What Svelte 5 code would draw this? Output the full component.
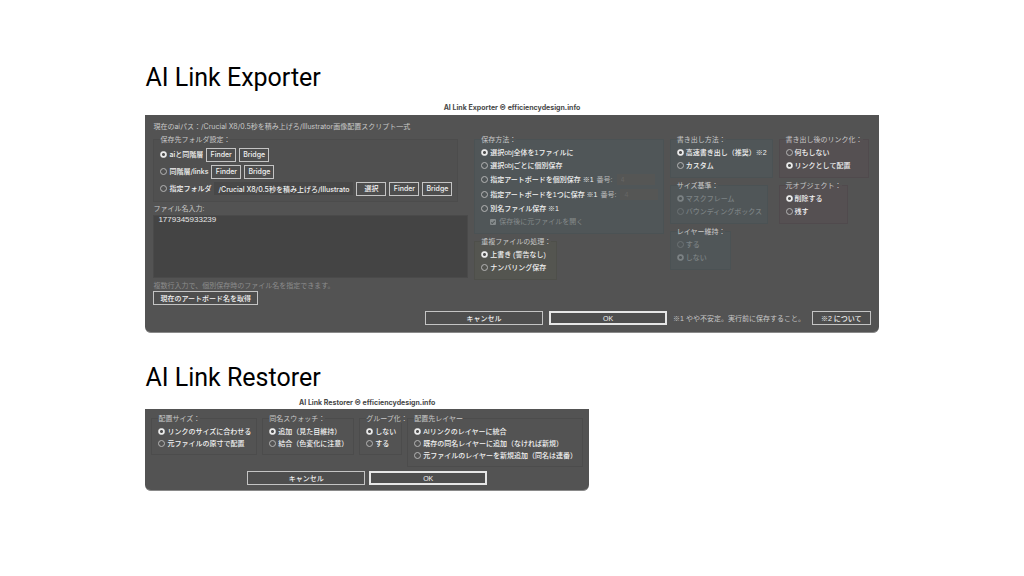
<script>
  const folder = '/Crucial X8/0.5秒を積み上げろ/Illustrato'

  const saveMethods = [
    { label: '選択obj全体を1ファイルに' },
    { label: '選択objごとに個別保存' },
    { label: '指定アートボードを個別保存 ※1', number: '4' },
    { label: '指定アートボードを1つに保存 ※1', number: '4' },
    { label: '別名ファイル保存 ※1' },
  ]

  const exportGroups = [
    { id: 'speed', title: '書き出し方法：', options: ['高速書き出し（推奨）※2', 'カスタム'], picked: 0 },
    { id: 'size', title: 'サイズ基準：', options: ['マスクフレーム', 'バウンディングボックス'], picked: 0, disabled: true },
    { id: 'layer', title: 'レイヤー維持：', options: ['する', 'しない'], picked: 1, disabled: true },
  ]

  const linkGroups = [
    { id: 'link', title: '書き出し後のリンク化：', options: ['何もしない', 'リンクとして配置'], picked: 1 },
    { id: 'source', title: '元オブジェクト：', options: ['削除する', '残す'], picked: 0 },
  ]

  const duplicateGroup = {
    id: 'duplicate',
    title: '重複ファイルの処理：',
    options: ['上書き (警告なし)', 'ナンバリング保存'],
    picked: 0,
  }

  const restoreGroups = [
    { id: 'place', title: '配置サイズ：', options: ['リンクのサイズに合わせる', '元ファイルの原寸で配置'], picked: 0 },
    { id: 'swatch', title: '同名スウォッチ：', options: ['追加（見た目維持）', '結合（色変化に注意）'], picked: 0 },
    { id: 'grouping', title: 'グループ化：', options: ['しない', 'する'], picked: 0 },
    {
      id: 'target',
      title: '配置先レイヤー',
      options: [
        'AIリンクのレイヤーに統合',
        '既存の同名レイヤーに追加（なければ新規）',
        '元ファイルのレイヤーを新規追加（同名は連番）',
      ],
      picked: 0,
    },
  ]

  let names = $state('1779345933239')
</script>

{#snippet radioGroup(group, tint)}
  <fieldset class={tint} disabled={group.disabled}>
    <legend>{group.title}</legend>
    {#each group.options as option, i}
      <label class="option">
        <input type="radio" name={group.id} checked={i === group.picked} />
        {option}
      </label>
    {/each}
  </fieldset>
{/snippet}

<main lang="ja">
  <section>
    <h1>AI Link Exporter</h1>
    <div class="window">
      <h2>AI Link Exporter © efficiencydesign.info</h2>
      <form class="panel exporter">
        <p class="path">現在のaiパス：/Crucial X8/0.5秒を積み上げろ/Illustrator画像配置スクリプト一式</p>
        <div class="columns">
          <div class="column files">
            <fieldset class="folders">
              <legend>保存先フォルダ設定：</legend>
              <div class="folder">
                <label class="option"><input type="radio" name="folder" checked /> aiと同階層</label>
                <button type="button">Finder</button>
                <button type="button">Bridge</button>
              </div>
              <div class="folder">
                <label class="option"><input type="radio" name="folder" /> 同階層/links</label>
                <button type="button">Finder</button>
                <button type="button">Bridge</button>
              </div>
              <div class="folder">
                <label class="option"><input type="radio" name="folder" /> 指定フォルダ</label>
                <input class="folder-path" type="text" value={folder} aria-label="指定フォルダ" />
                <button type="button">選択</button>
                <button type="button">Finder</button>
                <button type="button">Bridge</button>
              </div>
            </fieldset>
            <label class="names-label" for="names">ファイル名入力:</label>
            <textarea id="names" bind:value={names}></textarea>
            <p class="hint">複数行入力で、個別保存時のファイル名を指定できます。</p>
            <button type="button" class="artboard">現在のアートボード名を取得</button>
          </div>

          <div class="column methods">
            <fieldset class="teal wide">
              <legend>保存方法：</legend>
              {#each saveMethods as method, i}
                <div class="method">
                  <label class="option">
                    <input type="radio" name="method" checked={i === 0} />
                    {method.label}
                  </label>
                  {#if method.number}
                    <label class="number">
                      番号:
                      <input type="text" value={method.number} disabled />
                    </label>
                  {/if}
                </div>
              {/each}
              <label class="option reopen">
                <input type="checkbox" checked disabled />
                保存後に元ファイルを開く
              </label>
            </fieldset>
            {@render radioGroup(duplicateGroup, 'olive')}
          </div>

          <div class="column">
            {#each exportGroups as group (group.id)}
              {@render radioGroup(group, 'teal')}
            {/each}
          </div>

          <div class="column">
            {#each linkGroups as group (group.id)}
              {@render radioGroup(group, 'plum')}
            {/each}
          </div>
        </div>
        <div class="actions">
          <button type="button" class="main-btn">キャンセル</button>
          <button type="button" class="main-btn ok">OK</button>
          <span class="note">※1 やや不安定。実行前に保存すること。</span>
          <button type="button" class="about">※2 について</button>
        </div>
      </form>
    </div>
  </section>

  <section>
    <h1>AI Link Restorer</h1>
    <div class="window small">
      <h2>AI Link Restorer © efficiencydesign.info</h2>
      <form class="panel restorer">
        <div class="groups">
          {#each restoreGroups as group (group.id)}
            {@render radioGroup(group, 'plain')}
          {/each}
        </div>
        <div class="actions">
          <button type="button" class="main-btn">キャンセル</button>
          <button type="button" class="main-btn ok">OK</button>
        </div>
      </form>
    </div>
  </section>
</main>

<style>
  :global(body) {
    margin: 0;
    background: #fff;
  }
  main {
    display: flex;
    flex-direction: column;
    gap: 30px;
    padding: 63px 14.2%;
    font-family: 'Liberation Sans', 'Noto Sans CJK JP', sans-serif;
    font-size: 7px;
    line-height: 9px;
    color: #f2f2f2;
    white-space: nowrap;
  }
  h1 {
    margin: 0;
    font-family: Roboto, sans-serif;
    font-size: 25px;
    font-weight: 400;
    line-height: 30px;
    color: #000;
  }
  h2 {
    margin: 0;
    padding: 10px 0 3px;
    font-family: Inter, sans-serif;
    font-size: 7px;
    font-weight: 700;
    line-height: 9px;
    color: #484848;
    text-align: center;
  }
  p {
    margin: 0;
  }
  .window.small {
    width: fit-content;
  }
  .small h2 {
    padding: 5px 0 2px;
  }
  .panel {
    box-sizing: border-box;
    background: #535353;
    border-bottom: 1px solid #8a8a8a;
    border-radius: 0 0 6px 6px;
  }
  .exporter {
    padding: 6px 8px 7px;
  }
  .path {
    font-family: Inter, 'Noto Sans CJK JP', sans-serif;
    line-height: 11px;
    color: #c8c8c8;
  }
  .columns {
    display: flex;
    gap: 6px;
    margin-top: 3px;
    padding-right: 2px;
  }
  .column {
    display: flex;
    flex-direction: column;
    align-items: flex-start;
    gap: 3px;
  }
  .column.files {
    flex: 1;
    gap: 0;
  }
  .column.methods {
    width: 26.5%;
  }

  fieldset {
    min-width: 0;
    margin: 0;
    padding: 2px 5px 5px 6px;
    border: 1px solid #4c4c4c;
  }
  fieldset.teal {
    background: #505658;
    border-color: #4b5254;
  }
  fieldset.plum {
    background: #555052;
    border-color: #504a4d;
  }
  fieldset.olive {
    background: #545550;
    border-color: #4e4f4a;
  }
  fieldset.wide {
    width: 100%;
    box-sizing: border-box;
  }
  legend {
    padding: 0;
    color: #c8c8c8;
  }
  .option {
    display: flex;
    align-items: center;
    gap: 2px;
    height: 13px;
    font-weight: 500;
  }
  fieldset:disabled .option {
    color: #7c8284;
  }
  input[type='radio'] {
    appearance: none;
    box-sizing: border-box;
    flex: none;
    width: 7px;
    height: 7px;
    margin: 0;
    border: 1px solid #b4b4b4;
    border-radius: 50%;
  }
  input[type='radio']:checked {
    border-color: #ececec;
    background: radial-gradient(circle, #505050 1px, #ececec 2px);
  }
  input[type='radio']:disabled {
    border-color: #6c7274;
  }
  input[type='radio']:checked:disabled {
    border-color: #7c8284;
    background: radial-gradient(circle, #505658 1px, #7c8284 2px);
  }

  button {
    box-sizing: border-box;
    height: 14px;
    padding: 0 3px;
    background: #4e4e4e;
    border: 1px solid #c4c4c4;
    border-radius: 0;
    color: #f2f2f2;
    font: inherit;
    font-weight: 500;
  }
  .folders {
    background: #505050;
    padding-bottom: 4px;
  }
  .folder {
    display: flex;
    align-items: center;
    gap: 3px;
    height: 17px;
    font-family: Inter, 'Noto Sans CJK JP', sans-serif;
  }
  .folder button {
    min-width: 30px;
  }
  .folder-path {
    box-sizing: border-box;
    width: 139px;
    height: 13px;
    padding: 0 3px 0 4px;
    background: #484848;
    border: 0;
    color: #f2f2f2;
    font: inherit;
    font-weight: 500;
  }
  .names-label {
    margin: 2px 0;
    color: #c8c8c8;
  }
  textarea {
    box-sizing: border-box;
    width: 100%;
    height: 63px;
    padding: 0 4px;
    background: #444;
    border: 1px solid #4a4a4a;
    color: #e8e8e8;
    font: inherit;
    font-size: 8px;
    line-height: 7px;
    resize: none;
  }
  .hint {
    margin: 3px 0 1px;
    color: #8c8c8c;
  }
  .artboard {
    padding: 0 6px;
  }

  .method {
    display: flex;
    align-items: center;
    gap: 3px;
  }
  .number {
    display: flex;
    align-items: center;
    gap: 4px;
    height: 15px;
    color: #b8b8b8;
  }
  .number input {
    box-sizing: border-box;
    width: 38px;
    height: 11px;
    padding: 0 4px;
    background: #555655;
    border: 0;
    color: #666;
    font: inherit;
  }
  .option.reopen {
    margin-left: 9px;
    color: #858a8b;
    font-weight: 400;
  }
  .reopen input {
    appearance: none;
    display: grid;
    place-items: center;
    width: 6px;
    height: 6px;
    margin: 0 1px 0 0;
    background: #858a8b;
    border-radius: 1px;
  }
  .reopen input::before {
    content: '';
    width: 1px;
    height: 3px;
    border: solid #505658;
    border-width: 0 1px 1px 0;
    transform: rotate(45deg);
  }

  .actions {
    display: flex;
    align-items: center;
    justify-content: flex-end;
    gap: 6px;
    margin-top: 6px;
  }
  .main-btn {
    width: 118px;
  }
  .main-btn.ok {
    border: 2px solid #e6e6e6;
  }
  .note {
    padding-right: 1px;
    color: #c8c8c8;
  }
  .about {
    padding: 0 8px;
  }

  .restorer {
    padding: 5px 6px 5px;
  }
  .groups {
    display: flex;
    align-items: flex-start;
    gap: 5px;
  }
  .restorer legend {
    margin-right: -12px;
  }
  .restorer .option {
    height: 12px;
  }
  .restorer .actions {
    justify-content: center;
    gap: 4px;
    margin-top: 4px;
  }
</style>
